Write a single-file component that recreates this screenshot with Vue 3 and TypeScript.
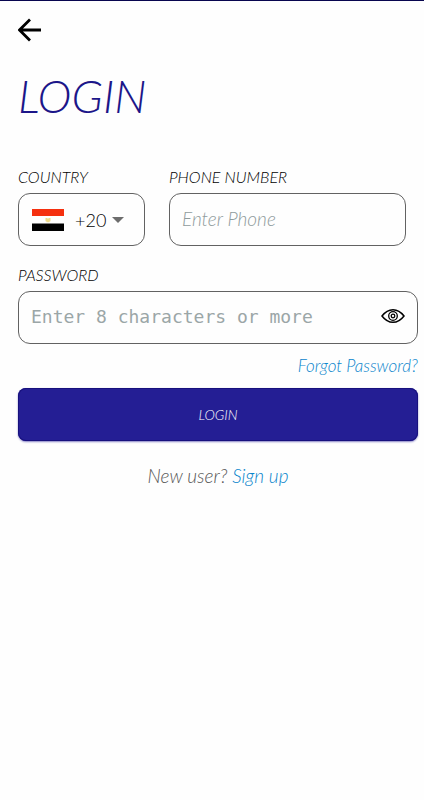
<script setup lang="ts">
import { ref } from 'vue'

const country = ref('+20')
const phone = ref('')
const password = ref('')
const passwordVisible = ref(false)
</script>

<template>
  <main class="page">
    <button class="back" type="button" aria-label="Back">
      <svg width="24" height="24" viewBox="0 0 24 24" aria-hidden="true">
        <path d="M23 12H2M12 1.5 1.5 12 12 22.5" fill="none" stroke="#000" stroke-width="2.8" />
      </svg>
    </button>

    <h1 class="title">LOGIN</h1>

    <form class="form" @submit.prevent>
      <div class="row">
        <div class="field country">
          <label for="country">COUNTRY</label>
          <div class="box">
            <svg class="flag" width="32" height="22" viewBox="0 0 32 22" aria-hidden="true">
              <path d="M0 0h32v22H0z" fill="#fff" />
              <path d="M0 0h32v7H0z" fill="#f5300f" />
              <path d="M0 14.500h32V22H0z" fill="#000" />
              <path d="M13.500 9h1.500l1 .7 1-.7h1.500v3.200l-1 .3v.8h-3v-.8l-1-.3z" fill="#efdc8b" />
            </svg>
            <select id="country" v-model="country" class="code">
              <option value="+20">+20</option>
            </select>
            <svg class="caret" width="12" height="6" viewBox="0 0 12 6" aria-hidden="true">
              <path d="M0 0h12L6 6z" fill="#6d6d6d" />
            </svg>
          </div>
        </div>
        <div class="field phone">
          <label for="phone">PHONE NUMBER</label>
          <div class="box">
            <input id="phone" v-model="phone" type="tel" placeholder="Enter Phone" />
          </div>
        </div>
      </div>

      <div class="field password">
        <label for="password">PASSWORD</label>
        <div class="box">
          <input
            id="password"
            v-model="password"
            class="mono"
            :type="passwordVisible ? 'text' : 'password'"
            placeholder="Enter 8 characters or more"
          />
          <button class="eye" type="button" aria-label="Show password" @click="passwordVisible = !passwordVisible">
            <svg width="24" height="16" viewBox="0 0 24 16" fill="none" stroke="#000" aria-hidden="true">
              <path d="M1 8C4 4 7.500 1.700 12 1.700S20 4 23 8c-3 4-6.500 6.300-11 6.300S4 12 1 8z" stroke-width="1.500" />
              <circle cx="12" cy="8" r="4.300" stroke-width="1.300" />
              <circle cx="12" cy="8" r="1.800" stroke-width="1.300" />
            </svg>
          </button>
        </div>
      </div>

      <a class="forgot" href="#">Forgot Password?</a>
      <button class="submit" type="submit">LOGIN</button>
    </form>

    <p class="signup">New user? <a href="#">Sign up</a></p>
  </main>
</template>

<style>
body {
  background: #fefefe;
}
</style>

<style scoped>
.page {
  box-sizing: border-box;
  border-top: 1px solid #08064f;
  padding: 17px 6px 24px 18px;
  font-family: Lato, "Open Sans", sans-serif;
  font-style: italic;
  font-weight: 300;
  color: #000;
}

button,
input,
select {
  border: 0;
  padding: 0;
  background: transparent;
  font: inherit;
  color: inherit;
}

svg {
  display: block;
}

button {
  cursor: pointer;
}

a {
  color: #0a85cc;
  text-decoration: none;
}

.back {
  display: block;
}

.title {
  margin: 26px 0 0;
  font-size: 46px;
  line-height: 56px;
  font-weight: 300;
  color: #1c1689;
}

.form {
  display: flex;
  flex-direction: column;
  margin-top: 43px;
}

.row {
  display: flex;
  gap: 24px;
  margin-right: 12px;
}

.field {
  display: flex;
  flex-direction: column;
  min-width: 0;
}

.field label {
  font-size: 16px;
  line-height: 20px;
  margin-bottom: 6px;
}

.country {
  flex: 0 0 127px;
}

.phone {
  flex: 1;
}

.password {
  margin-top: 19px;
}

.box {
  box-sizing: border-box;
  display: flex;
  align-items: center;
  height: 53px;
  padding: 0 12px;
  border: 1px solid #626262;
  border-radius: 12px;
}

.country .box {
  padding: 0 20px 0 13px;
}

.flag {
  flex: none;
}

.code {
  flex: 1;
  min-width: 0;
  align-self: stretch;
  margin-left: 11px;
  appearance: none;
  font-size: 18px;
  font-style: normal;
}

.caret {
  flex: none;
  pointer-events: none;
}

input {
  flex: 1;
  min-width: 0;
  height: 48px;
  padding-bottom: 3px;
  box-sizing: border-box;
  outline: none;
  font-size: 19px;
}

input::placeholder {
  color: #8f9b9c;
  opacity: 1;
}

.mono {
  font-family: "DejaVu Sans Mono", monospace;
  font-size: 18px;
  font-style: normal;
  font-weight: 400;
}

.mono::placeholder {
  color: #9ba6a7;
}

.eye {
  flex: none;
  margin-bottom: 3px;
}

.forgot {
  align-self: flex-end;
  margin-top: 12px;
  font-size: 17px;
  line-height: 20px;
}

.submit {
  height: 53px;
  margin-top: 12px;
  border-radius: 8px;
  background: #241e94;
  box-shadow: inset 0 0 0 1px #17107d, 0 1px 2px #8581c4;
  color: #fff;
  font-size: 14px;
}

.signup {
  margin: 23px 0 0;
  font-size: 19px;
  line-height: 24px;
  text-align: center;
  color: #555;
}
</style>
